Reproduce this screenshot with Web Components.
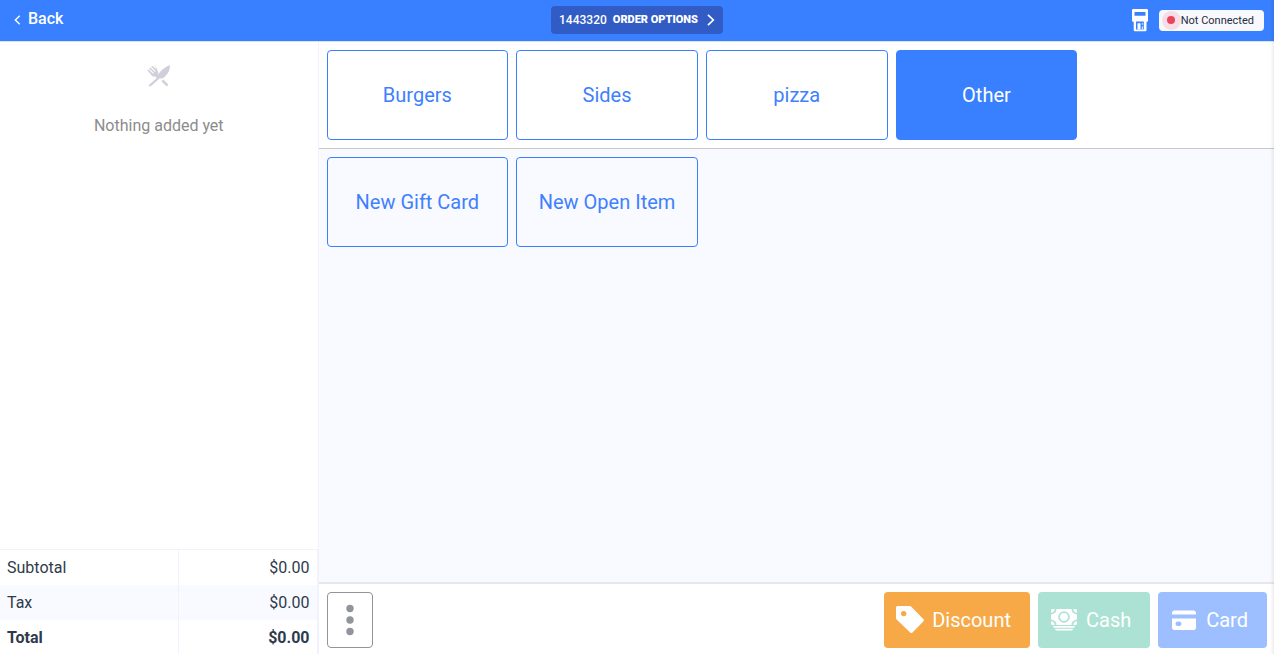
<!DOCTYPE html>
<html lang="en">
<head>
<meta charset="utf-8">
<meta name="viewport" content="width=device-width, initial-scale=1">
<title>Point of Sale</title>
<style>
  :root {
    --primary: #3880ff;
    --tint: #f9faff;
    --line: #f0f2fc;
    --ink: #2f3b4c;
  }
  body { margin: 0; font-family: Roboto, "Liberation Sans", sans-serif; color: var(--ink); background: #fff; }
</style>
</head>
<body>
<pos-app></pos-app>

<template id="t-app">
  <style>
    :host { display: flex; flex-direction: column; height: 100vh; position: relative; overflow: hidden; }
    :host::after { content: ""; position: absolute; top: 0; bottom: 0; right: 0; width: 4px; pointer-events: none;
      background: linear-gradient(to right, rgba(0,0,0,0), rgba(0,0,0,.07)); }
    .body { flex: 1; min-height: 0; display: grid; grid-template-columns: 1fr 3fr; }
    .menu { display: flex; flex-direction: column; min-width: 0; }
    .items { flex: 1; background: var(--tint); }
    .cats { border-bottom: 1px solid #c8c7cc; }
  </style>
  <pos-header></pos-header>
  <div class="body">
    <order-panel></order-panel>
    <main class="menu">
      <tile-grid class="cats">
        <menu-tile>Burgers</menu-tile>
        <menu-tile>Sides</menu-tile>
        <menu-tile>pizza</menu-tile>
        <menu-tile active>Other</menu-tile>
      </tile-grid>
      <tile-grid class="items">
        <menu-tile>New Gift Card</menu-tile>
        <menu-tile>New Open Item</menu-tile>
      </tile-grid>
      <action-bar></action-bar>
    </main>
  </div>
</template>

<template id="t-header">
  <style>
    :host { display: grid; grid-template-columns: 1fr auto 1fr; align-items: center; height: 41px; box-sizing: border-box;
      padding: 0 10px 1px; background: var(--primary); box-shadow: 0 1px 0 #dde3f3; position: relative; color: #fff; }
    a { display: inline-flex; align-items: center; gap: 7px; color: #fff; text-decoration: none; font-size: 16px; line-height: 20px; font-weight: 500; padding: 0 0 2px 4px; justify-self: start; }
    a svg { padding-top: 2px; }
    .options { display: flex; align-items: center; height: 28px; border: 0; border-radius: 4px; padding: 0 8px; background: #315cc5; color: #fff;
      font: 500 12px/28px Roboto, sans-serif; }
    .options b { font-size: 11px; font-weight: 900; margin: 0 9px 0 6px; }
    .right { display: flex; align-items: center; justify-content: flex-end; gap: 10px; }
    svg { display: block; }
  </style>
  <a href="#back"><svg width="7" height="10" viewBox="0 0 7 10" fill="none" stroke="currentColor" stroke-width="1.4"><path d="M5.7.8 1.3 5l4.4 4.2"/></svg>Back</a>
  <button class="options" type="button"><span>1443320</span><b>ORDER OPTIONS</b><svg width="8" height="12" viewBox="0 0 8 12" fill="none" stroke="currentColor" stroke-width="1.7"><path d="M1 .8 6.3 6 1 11.2"/></svg></button>
  <div class="right">
    <svg width="18" height="23" viewBox="0 0 18 23" fill="#fff" aria-hidden="true"><path fill-rule="evenodd" d="M2.2 0h13.600q1.200 0 1.200 1.200v10.300q0 1.300-1.500 1.500v8q0 1.200-1.200 1.200H4Q2.700 22.200 2.700 21v-8Q1 12.800 1 11.500V1.200Q1 0 2.200 0ZM3.500 3v3.700h11V3ZM5 12.500v8h7.800v-8Z"/><path d="M6.500 14.200h3v6.300h-3ZM10.800 14.200h1v1.600h-1ZM10.800 17.600h1v2.900h-1Z"/></svg>
    <status-pill>Not Connected</status-pill>
  </div>
</template>

<template id="t-pill">
  <style>
    :host { display: flex; align-items: center; height: 21px; padding: 0 10px 0 3px; border-radius: 4px; background: #f7f9fe; color: #272d38; font-size: 11px; }
    .dot { display: grid; place-items: center; width: 19px; height: 19px; border-radius: 50%; background: #f6dde6; }
    .dot::before { content: ""; width: 8px; height: 8px; border-radius: 50%; background: #eb445a; }
  </style>
  <span class="dot"></span><slot></slot>
</template>

<template id="t-order">
  <style>
    :host { display: flex; flex-direction: column; justify-content: space-between; min-width: 0; border-right: 1px solid var(--line); background: #fff; }
    .empty { display: flex; flex-direction: column; align-items: center; gap: 28px; padding-top: 23px; color: #8c8c8c; }
    p { margin: 0; font-size: 16px; line-height: 20px; }
    table { width: 100%; border-collapse: separate; border-spacing: 0; border-top: 1px solid var(--line); font-size: 16px; line-height: 19px; }
    th, td { padding: 8px 7px; font-weight: 400; }
    th { text-align: left; width: 164px; border-right: 1px solid var(--line); }
    td { text-align: right; border-right: 1px solid var(--line); }
    tr:nth-child(2) > * { background: var(--tint); }
    tr:last-child > * { font-weight: 700; padding-bottom: 7px; }
  </style>
  <div class="empty">
    <svg width="24" height="24" viewBox="0 0 24 24" fill="#cfd0d9" aria-hidden="true">
      <path d="M22.900 1.200C19.100 2 14.100 6.500 11.900 9.400c-1 1.400-1 2.300-.5 3.200L1.600 21.200l1.600 1.600 9.700-8.500c1.300.6 3 .2 4.700-1.300 3.400-3 5.600-7.300 5.300-11.800Z"/>
      <path d="M6.200.8 10.600 5.400l-.7.7L5.200 1.700l-1.100.9 4.600 4.600-.7.7L3.300 3.400 2.200 4.400l4.600 4.700-.7.7L1.300 5.300.4 6.400l4.400 5c1.200 1.200 2.400 1.500 3.600 1.200l1.800 1.800 2.600-2.500-1.600-1.800c.3-1.300 0-2.500-1-3.600ZM16.200 15.500l-1.800 1.700 5.300 5.300 1.800-1.700Z"/>
    </svg>
    <p>Nothing added yet</p>
  </div>
  <table>
    <tr><th scope="row">Subtotal</th><td>$0.00</td></tr>
    <tr><th scope="row">Tax</th><td>$0.00</td></tr>
    <tr><th scope="row">Total</th><td>$0.00</td></tr>
  </table>
</template>

<template id="t-grid">
  <style>
    :host { display: grid; grid-template-columns: repeat(5, minmax(0, 1fr)); align-content: start; gap: 8px; padding: 8px 7px 8px 8px; }
    :host(.cats) { padding-top: 9px; }
  </style>
  <slot></slot>
</template>

<template id="t-tile">
  <style>
    :host { display: block; }
    button { display: block; width: 100%; height: 90px; padding: 0 8px; border: 1px solid var(--primary); border-radius: 4px; background: transparent;
      color: #4080ff; font: 400 20px/24px Roboto, sans-serif; }
    :host([active]) button { background: var(--primary); color: #fff; }
  </style>
  <button type="button"><slot></slot></button>
</template>

<template id="t-actions">
  <style>
    :host { display: flex; align-items: center; gap: 8px; padding: 8px 7px 6px 8px; background: #fff; border-top: 2px solid #e6e7ed; }
    .more { width: 46px; height: 56px; padding: 0; border: 1px solid #92949c; border-radius: 4px; background: #fff; margin-right: auto; display: grid; place-items: center; }
  </style>
  <button class="more" type="button" aria-label="More"><svg width="8" height="32" viewBox="0 0 8 32" fill="#92949c"><circle cx="4" cy="4.500" r="3.700"/><circle cx="4" cy="16" r="3.700"/><circle cx="4" cy="27.500" r="3.700"/></svg></button>
  <action-button style="--bg:#f7a947">
    <svg slot="icon" width="28" height="28" viewBox="0 0 28 28" fill="#fff"><path fill-rule="evenodd" d="M1.500 0h12q1 0 1.600.6l12.200 12.500q1.100 1.200 0 2.300L16.500 26.500q-1.200 1.100-2.300 0L.6 13.500Q0 12.900 0 12V1.500Q0 0 1.500 0ZM7.700 4.900a2.700 2.700 0 1 0 0 5.400 2.700 2.700 0 1 0 0-5.400Z"/></svg>
    Discount</action-button>
  <action-button style="--bg:#abe2d3">
    <svg slot="icon" width="28" height="28" viewBox="0 0 28 28" fill="#fff"><path fill-rule="evenodd" d="M6.500 3h15c0 3 2 5 5.500 5.500v5c-3.500.5-5.500 2.500-5.500 5.500h-15c0-3-2-5-5.500-5.500v-5C4.500 8 6.500 6 6.500 3ZM14 5.200a5.800 5.800 0 1 0 0 11.600 5.800 5.800 0 1 0 0-11.600Zm0 1.800a4 4 0 1 1 0 8 4 4 0 1 1 0-8Z"/><path d="M1 6.800V4.500Q1 3 2.500 3h2.300Q4.500 6.500 1 6.800ZM27 6.800V4.500Q27 3 25.500 3h-2.300q.3 3.500 3.800 3.800ZM1 15.200v2.300Q1 19 2.500 19h2.300q-.3-3.500-3.800-3.800ZM27 15.200v2.300q0 1.500-1.500 1.500h-2.300q.3-3.500 3.800-3.800ZM3 20h22q0 1.800-1.500 1.800h-19Q3 21.800 3 20ZM5 22.800h18q0 1.700-1.500 1.700h-15Q5 24.500 5 22.800Z"/></svg>
    Cash</action-button>
  <action-button style="--bg:#9dbfff">
    <svg slot="icon" width="28" height="28" viewBox="0 0 28 28" fill="#fff"><path d="M2 8.500V7.300Q2 4.500 4.800 4.500h18.400Q26 4.500 26 7.300v1.200Z"/><path fill-rule="evenodd" d="M2 12.500h24v8.700q0 2.800-2.800 2.800H4.800Q2 24 2 21.200ZM7.700 15.500q-2.200 0-2.200 2.200t2.200 2.200h1.600q2.200 0 2.200-2.200t-2.200-2.200Z"/></svg>
    Card</action-button>
</template>

<template id="t-action">
  <style>
    :host { display: block; }
    button { display: flex; align-items: center; gap: 8px; height: 56px; padding: 0 19px 0 12px; border: 0; border-radius: 4px; background: var(--bg);
      color: #fff; font: 400 20px/24px Roboto, sans-serif; }
  </style>
  <button type="button"><slot name="icon"></slot><span><slot></slot></span></button>
</template>

<script>
  const define = (name, id) => customElements.define(name, class extends HTMLElement {
    constructor() {
      super();
      this.attachShadow({ mode: "open" }).append(document.getElementById(id).content.cloneNode(true));
    }
  });
  define("status-pill", "t-pill");
  define("menu-tile", "t-tile");
  define("tile-grid", "t-grid");
  define("action-button", "t-action");
  define("action-bar", "t-actions");
  define("order-panel", "t-order");
  define("pos-header", "t-header");
  define("pos-app", "t-app");
</script>
</body>
</html>
